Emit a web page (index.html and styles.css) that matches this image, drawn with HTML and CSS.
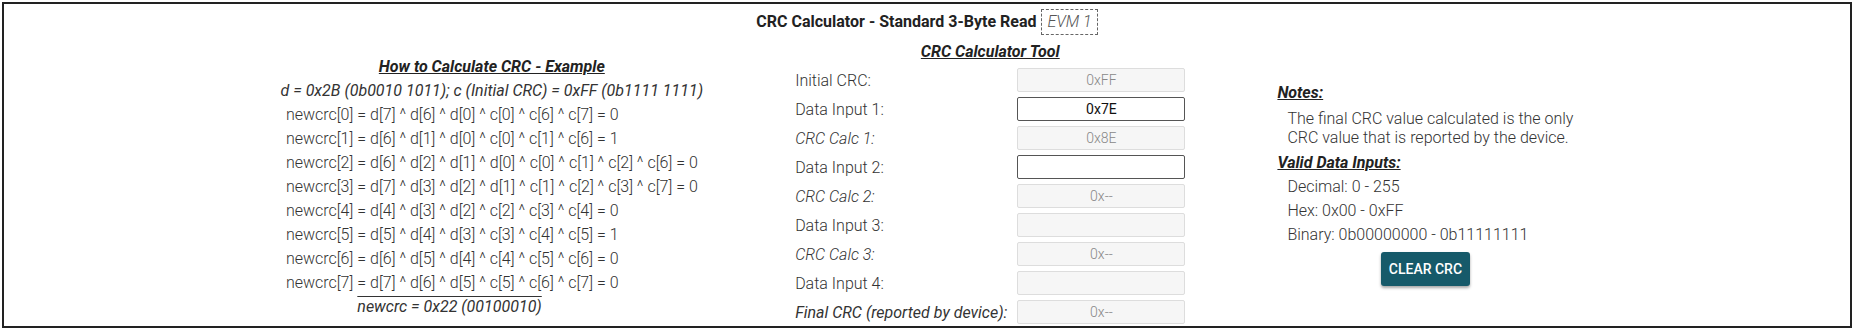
FILE: index.html
```html
<!DOCTYPE html>
<html lang="en">
<head>
    <meta charset="UTF-8">
    <meta name="viewport" content="width=device-width, initial-scale=1.0">
    <title>CRC Calculator</title>
    <link rel="stylesheet" href="styles.css">
</head>
<body>
    <div class="frame">
        <!-- Encabezado -->
        <div class="header">
            <span class="header-title">CRC Calculator - Standard 3-Byte Read</span>
            <span class="evm">EVM 1</span>
        </div>

        <div class="panels">
            <!-- Ejemplo -->
            <div class="example">
                <div class="heading">How to Calculate CRC - Example</div>
                <div class="given">d = 0x2B (0b0010 1011); c (Initial CRC) = 0xFF (0b1111 1111)</div>
                <div class="eqs">
                    <span>newcrc[0]</span><span>= d[7] ^ d[6] ^ d[0] ^ c[0] ^ c[6] ^ c[7] = 0</span>
                    <span>newcrc[1]</span><span>= d[6] ^ d[1] ^ d[0] ^ c[0] ^ c[1] ^ c[6] = 1</span>
                    <span>newcrc[2]</span><span>= d[6] ^ d[2] ^ d[1] ^ d[0] ^ c[0] ^ c[1] ^ c[2] ^ c[6] = 0</span>
                    <span>newcrc[3]</span><span>= d[7] ^ d[3] ^ d[2] ^ d[1] ^ c[1] ^ c[2] ^ c[3] ^ c[7] = 0</span>
                    <span>newcrc[4]</span><span>= d[4] ^ d[3] ^ d[2] ^ c[2] ^ c[3] ^ c[4] = 0</span>
                    <span>newcrc[5]</span><span>= d[5] ^ d[4] ^ d[3] ^ c[3] ^ c[4] ^ c[5] = 1</span>
                    <span>newcrc[6]</span><span>= d[6] ^ d[5] ^ d[4] ^ c[4] ^ c[5] ^ c[6] = 0</span>
                    <span>newcrc[7]</span><span>= d[7] ^ d[6] ^ d[5] ^ c[5] ^ c[6] ^ c[7] = 0</span>
                    <span></span><span><span class="result">newcrc = 0x22 (00100010)</span></span>
                </div>
            </div>

            <!-- Calculadora -->
            <div class="tool">
                <div class="heading">CRC Calculator Tool</div>
                <div class="fields">
                    <label>Initial CRC:</label>
                    <input class="box" type="text" value="0xFF" disabled>
                    <label>Data Input 1:</label>
                    <input class="box active" type="text" value="0x7E">
                    <label class="calc">CRC Calc 1:</label>
                    <input class="box" type="text" value="0x8E" disabled>
                    <label>Data Input 2:</label>
                    <input class="box active" type="text" value="">
                    <label class="calc">CRC Calc 2:</label>
                    <input class="box" type="text" value="0x--" disabled>
                    <label>Data Input 3:</label>
                    <input class="box" type="text" value="" disabled>
                    <label class="calc">CRC Calc 3:</label>
                    <input class="box" type="text" value="0x--" disabled>
                    <label>Data Input 4:</label>
                    <input class="box" type="text" value="" disabled>
                    <label class="calc final">Final CRC (reported by device):</label>
                    <input class="box" type="text" value="0x--" disabled>
                </div>
            </div>

            <!-- Notas -->
            <div class="notes">
                <div class="heading">Notes:</div>
                <p class="note-text">The final CRC value calculated is the only<br>CRC value that is reported by the device.</p>
                <div class="heading">Valid Data Inputs:</div>
                <div class="item">Decimal: 0 - 255</div>
                <div class="item">Hex: 0x00 - 0xFF</div>
                <div class="item">Binary: 0b00000000 - 0b11111111</div>
                <div class="actions">
                    <button class="clear-btn" id="clear">CLEAR CRC</button>
                </div>
            </div>
        </div>
    </div>

    <script>
        // Limpiar entradas
        document.getElementById('clear').addEventListener('click', () => {
            document.querySelectorAll('.box.active').forEach(el => el.value = '');
        });
    </script>
</body>
</html>
```

FILE: styles.css
```css
body {
    font-family: Roboto, "Liberation Sans", Arial, sans-serif;
    font-size: 16px;
    font-weight: 300;
    color: #333;
    margin: 0;
    padding: 2px 3px 3px 2px;
    background: #fff;
}

/* Marco */
.frame {
    border: 2px solid #222;
    height: 326px;
    box-sizing: border-box;
    display: flex;
    flex-direction: column;
    overflow: hidden;
}

.header {
    text-align: center;
    padding-top: 5px;
    height: 34px;
    box-sizing: border-box;
    flex-shrink: 0;
}

.header-title {
    font-weight: 700;
    color: #222;
    font-size: 16px;
}

.evm {
    display: inline-block;
    border: 1px dashed #666;
    font-style: italic;
    color: #555;
    padding: 3px 5px;
    line-height: 18px;
    margin-left: 1px;
}

.panels {
    flex: 1;
    display: flex;
    justify-content: center;
    align-items: center;
    gap: 92px;
}

.heading {
    font-weight: 700;
    font-style: italic;
    text-decoration: underline;
    color: #222;
    line-height: 24px;
}

/* Ejemplo */
.example {
    text-align: center;
    line-height: 24px;
    padding-top: 9px;
}

.given {
    font-style: italic;
    font-weight: 400;
}

.eqs {
    display: inline-grid;
    grid-template-columns: auto auto;
    column-gap: 4px;
    text-align: left;
}

.result {
    font-style: italic;
    font-weight: 400;
    text-decoration: overline;
}

/* Calculadora */
.tool .heading {
    text-align: center;
    margin-bottom: 4px;
}

.fields {
    display: grid;
    grid-template-columns: auto 168px;
    column-gap: 10px;
    row-gap: 5px;
    align-items: center;
}

.fields .calc {
    font-style: italic;
}

.fields .final {
    font-weight: 400;
}

.box {
    height: 24px;
    box-sizing: border-box;
    width: 168px;
    border: 1px solid #ddd;
    border-radius: 2px;
    background: #f6f6f6;
    color: #888;
    font-family: Roboto, "Liberation Sans", Arial, sans-serif;
    font-size: 14px;
    font-weight: 300;
    text-align: center;
    padding: 0 4px;
}

.box.active {
    background: #fff;
    border-color: #555;
    color: #111;
    font-weight: 400;
}

/* Notas */
.notes {
    display: flex;
    flex-direction: column;
    padding-top: 2px;
}

.note-text {
    margin: 4px 0 4px 10px;
    line-height: 19px;
}

.item {
    margin-left: 10px;
    line-height: 24px;
}

.actions {
    text-align: center;
    margin-top: 5px;
}

.clear-btn {
    background-color: #165a6a;
    color: white;
    border: none;
    border-radius: 3px;
    font-family: Roboto, "Liberation Sans", Arial, sans-serif;
    font-size: 14px;
    font-weight: 500;
    height: 34px;
    padding: 0 8px;
    box-shadow: 0 2px 3px rgba(0, 0, 0, 0.35);
    cursor: pointer;
}

.clear-btn:hover {
    background-color: #1d6f82;
}
```
